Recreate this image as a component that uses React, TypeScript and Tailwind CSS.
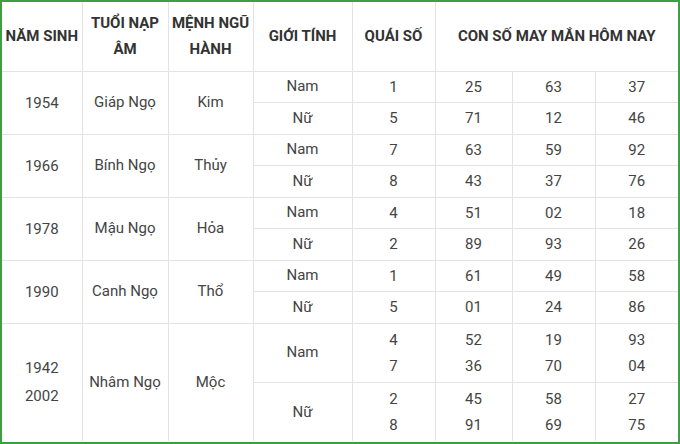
import React from "react";

type Group = {
  years: string[];
  tuoi: string;
  menh: string;
  rows: { gioi: string; quai: string[]; nums: string[][] }[];
};

const groups: Group[] = [
  {
    years: ["1954"],
    tuoi: "Giáp Ngọ",
    menh: "Kim",
    rows: [
      { gioi: "Nam", quai: ["1"], nums: [["25", "63", "37"]] },
      { gioi: "Nữ", quai: ["5"], nums: [["71", "12", "46"]] },
    ],
  },
  {
    years: ["1966"],
    tuoi: "Bính Ngọ",
    menh: "Thủy",
    rows: [
      { gioi: "Nam", quai: ["7"], nums: [["63", "59", "92"]] },
      { gioi: "Nữ", quai: ["8"], nums: [["43", "37", "76"]] },
    ],
  },
  {
    years: ["1978"],
    tuoi: "Mậu Ngọ",
    menh: "Hỏa",
    rows: [
      { gioi: "Nam", quai: ["4"], nums: [["51", "02", "18"]] },
      { gioi: "Nữ", quai: ["2"], nums: [["89", "93", "26"]] },
    ],
  },
  {
    years: ["1990"],
    tuoi: "Canh Ngọ",
    menh: "Thổ",
    rows: [
      { gioi: "Nam", quai: ["1"], nums: [["61", "49", "58"]] },
      { gioi: "Nữ", quai: ["5"], nums: [["01", "24", "86"]] },
    ],
  },
  {
    years: ["1942", "2002"],
    tuoi: "Nhâm Ngọ",
    menh: "Mộc",
    rows: [
      { gioi: "Nam", quai: ["4", "7"], nums: [["52", "19", "93"], ["36", "70", "04"]] },
      { gioi: "Nữ", quai: ["2", "8"], nums: [["45", "58", "27"], ["91", "69", "75"]] },
    ],
  },
];

const cell = "border border-[#e3e3e3] text-center align-middle p-0";

function Lines({ items }: { items: string[] }) {
  return (
    <div className="flex flex-col">
      {items.map((t, i) => (
        <span key={i} className="leading-[26px]">
          {t}
        </span>
      ))}
    </div>
  );
}

export default function App() {
  return (
    <div
      className="w-[680px] h-[444px] bg-white border-2 border-[#3d9e44] overflow-hidden text-[15px] text-[#444]"
      style={{ fontFamily: "Roboto, 'Noto Sans', sans-serif" }}
    >
      <table className="w-full table-fixed border-collapse border-hidden">
        <colgroup>
          <col className="w-[80px]" />
          <col className="w-[86px]" />
          <col className="w-[85px]" />
          <col className="w-[99px]" />
          <col className="w-[83px]" />
          <col className="w-[77px]" />
          <col className="w-[83px]" />
          <col className="w-[83px]" />
        </colgroup>
        <thead>
          <tr className="h-[69px] font-bold text-[#333] leading-[26px]">
            <th className={cell}>NĂM SINH</th>
            <th className={cell}>
              TUỔI NẠP
              <br />
              ÂM
            </th>
            <th className={cell}>
              MỆNH NGŨ
              <br />
              HÀNH
            </th>
            <th className={cell}>GIỚI TÍNH</th>
            <th className={cell}>QUÁI SỐ</th>
            <th className={cell} colSpan={3}>
              CON SỐ MAY MẮN HÔM NAY
            </th>
          </tr>
        </thead>
        <tbody>
          {groups.map((g, gi) =>
            g.rows.map((r, ri) => {
              const tall = r.quai.length > 1;
              const h = tall ? "h-[59px]" : ri === 0 ? "h-[31px]" : "h-[32px]";
              return (
                <tr key={`${gi}-${ri}`} className={h}>
                  {ri === 0 && (
                    <>
                      <td className={cell} rowSpan={g.rows.length}>
                        <div className="flex flex-col leading-[28px]">
                          {g.years.map((y) => (
                            <span key={y}>{y}</span>
                          ))}
                        </div>
                      </td>
                      <td className={cell} rowSpan={g.rows.length}>
                        {g.tuoi}
                      </td>
                      <td className={cell} rowSpan={g.rows.length}>
                        {g.menh}
                      </td>
                    </>
                  )}
                  <td className={cell}>{r.gioi}</td>
                  <td className={cell}>
                    <Lines items={r.quai} />
                  </td>
                  {[0, 1, 2].map((c) => (
                    <td key={c} className={cell}>
                      <Lines items={r.nums.map((n) => n[c])} />
                    </td>
                  ))}
                </tr>
              );
            })
          )}
        </tbody>
      </table>
    </div>
  );
}
